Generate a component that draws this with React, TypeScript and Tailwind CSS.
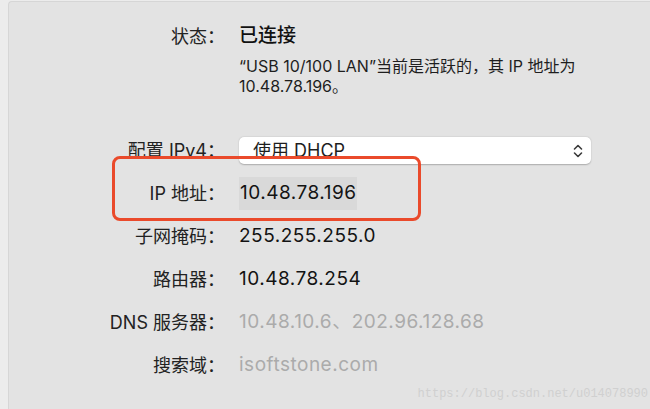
import React from 'react';

const font = { fontFamily: '"Inter", "Noto Sans CJK SC", sans-serif' };

const rows: { label: string; value: string; dim?: boolean; highlight?: boolean }[] = [
  { label: 'IP 地址：', value: '10.48.78.196', highlight: true },
  { label: '子网掩码：', value: '255.255.255.0' },
  { label: '路由器：', value: '10.48.78.254' },
  { label: 'DNS 服务器：', value: '10.48.10.6、202.96.128.68', dim: true },
  { label: '搜索域：', value: 'isoftstone.com', dim: true },
];

const UpDown = () => (
  <svg width="10" height="16" viewBox="0 0 10 16" fill="none" stroke="#3a3a3a" strokeWidth="1.6" strokeLinecap="round" strokeLinejoin="round">
    <path d="M1.5 6 5 2.5 8.5 6" />
    <path d="M1.5 10 5 13.5 8.5 10" />
  </svg>
);

export default function App() {
  return (
    <div className="w-[650px] h-[409px] bg-[#ececec] pl-[8px] pt-[1px] overflow-hidden" style={font}>
      <div className="relative h-full bg-[#e3e3e3] border-t border-l border-[#d6d6d6] rounded-tl-[4px] pt-[22px] text-[#222]">
        {/* status */}
        <div className="flex h-[24px] items-center">
          <div className="w-[216px] text-right text-[18px] text-[#222]">状态：</div>
          <div className="ml-[14px] text-[19px] font-medium text-[#111]">已连接</div>
        </div>
        <div className="ml-[230px] mt-[8px] text-[16px] leading-[20px] text-[#1e1e1e]">
          <div>“USB 10/100 LAN”当前是活跃的，其 IP 地址为</div>
          <div>10.48.78.196。</div>
        </div>

        {/* ipv4 config */}
        <div className="flex items-center mt-[41px] h-[27px]">
          <div className="w-[216px] text-right text-[18px] text-[#222]">配置 IPv4：</div>
          <div className="ml-[14px] w-[352px] h-[27px] bg-white rounded-[5px] shadow-[0_0.5px_1.5px_rgba(0,0,0,0.25)] flex items-center justify-between pl-[14px] pr-[8px]">
            <span className="text-[18px] text-[#1e1e1e]">使用 DHCP</span>
            <UpDown />
          </div>
        </div>

        <div className="mt-[8px]">
          {rows.map(r => (
            <div key={r.label} className="flex items-center h-[43px]">
              <div className="w-[216px] text-right text-[18px] text-[#222] whitespace-nowrap">{r.label}</div>
              <div
                className={`ml-[14px] text-[19px] tracking-[0.5px] whitespace-nowrap ${r.dim ? 'text-[#ababab]' : 'text-[#131313]'} ${r.highlight ? 'bg-[#d9d9d9] px-[1px] py-[2px]' : ''}`}
              >
                {r.value}
              </div>
            </div>
          ))}
        </div>

        {/* annotation */}
        <div className="absolute left-[103px] top-[154px] w-[309px] h-[65px] border-[3px] border-[#ea4a2b] rounded-[8px]" />

        {/* watermark */}
        <div className="absolute right-[2px] bottom-[6px] text-[12px] text-[#d0d0d0]" style={{ fontFamily: '"Liberation Mono", monospace' }}>
          https://blog.csdn.net/u014078990
        </div>
      </div>
    </div>
  );
}
